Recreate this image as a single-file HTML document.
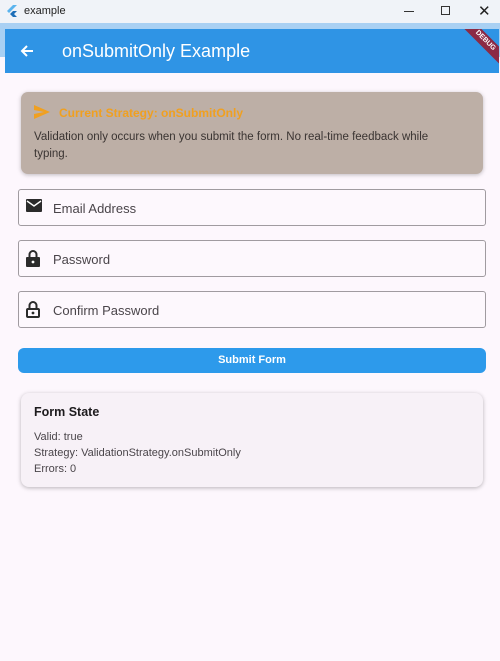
<!DOCTYPE html>
<html><head><meta charset="utf-8"><style>
*{margin:0;padding:0;box-sizing:border-box}
body{width:500px;height:661px;overflow:hidden;background:#fdf7fd;font-family:"Liberation Sans",sans-serif;position:relative}
.tb{position:absolute;left:0;top:0;width:500px;height:23px;background:#f0f3f8;font-size:11px;color:#222}
.strip{position:absolute;left:0;top:23px;width:500px;height:34px;background:#a9d0f3}
.bar{position:absolute;left:5px;top:29px;width:494px;height:44px;background:#2f94e5;color:#fff;overflow:hidden}
.fld{position:absolute;left:18px;width:468px;height:37px;border:1px solid #a09ba0;border-radius:3px;background:#fdf8fd;font-size:13px;color:#4a454a}
.fld span{position:absolute;left:34px;top:11px}
.fld svg{position:absolute;left:7px;top:9px}
</style></head><body>
<div class="tb">
<svg style="position:absolute;left:7px;top:5px" width="10" height="13" viewBox="0 0 10 13"><path d="M6 0L0 6l2 2 8-8z" fill="#5ab4ee"/><path d="M6 6L3 9l3 3h4L7 9l3-3z" fill="#1e6fb8"/></svg>
<span style="position:absolute;left:24px;top:5px">example</span>
<div style="position:absolute;left:404px;top:11px;width:10px;height:1px;background:#333"></div>
<div style="position:absolute;left:441px;top:6px;width:9px;height:9px;border:1px solid #333"></div>
<span style="position:absolute;left:478px;top:2px;font-size:15px">✕</span>
</div>
<div class="strip"></div>
<div class="bar">
<svg style="position:absolute;left:15px;top:15px" width="14" height="14" viewBox="0 0 14 14"><path d="M13 7H2M7 2L2 7l5 5" stroke="#fff" stroke-width="2" fill="none"/></svg>
<span style="position:absolute;left:57px;top:12px;font-size:18px">onSubmitOnly Example</span>
<div style="position:absolute;right:-16px;top:6px;width:60px;height:12px;background:#8b2a45;transform:rotate(45deg);color:#fff;font-size:7px;font-weight:bold;text-align:center;line-height:12px">DEBUG</div>
</div>
<div style="position:absolute;left:21px;top:92px;width:462px;height:82px;background:#bdafa6;border-radius:7px;box-shadow:0 1px 4px rgba(0,0,0,.25)">
<svg style="position:absolute;left:13px;top:13px" width="16" height="14" viewBox="0 0 16 14"><path d="M0 0L16 7 0 14 0 9 10 7 0 5z" fill="#f0a020"/></svg>
<span style="position:absolute;left:38px;top:14px;font-size:12px;font-weight:bold;color:#f0a020">Current Strategy: onSubmitOnly</span>
<div style="position:absolute;left:13px;top:37px;width:430px;font-size:11.5px;line-height:17px;color:#3a3432">Validation only occurs when you submit the form. No real-time feedback while typing.</div>
</div>
<div class="fld" style="top:189px"><svg width="16" height="13" viewBox="0 0 16 13"><rect width="16" height="13" rx="1" fill="#2b2b2b"/><path d="M1 2l7 5 7-5" stroke="#fff" stroke-width="1.4" fill="none"/></svg><span>Email Address</span></div>
<div class="fld" style="top:240px"><svg width="14" height="17" viewBox="0 0 14 17"><path d="M3.5 7V4.5a3.5 3.5 0 017 0V7" stroke="#2b2b2b" stroke-width="2" fill="none"/><rect y="7" width="14" height="10" rx="1" fill="#2b2b2b"/><circle cx="7" cy="12" r="1.4" fill="#fff"/></svg><span>Password</span></div>
<div class="fld" style="top:291px"><svg width="14" height="17" viewBox="0 0 14 17"><path d="M3.5 7V4.5a3.5 3.5 0 017 0V7" stroke="#2b2b2b" stroke-width="2" fill="none"/><rect x="1" y="8" width="12" height="8" rx="1" stroke="#2b2b2b" stroke-width="2" fill="none"/><circle cx="7" cy="12" r="1.4" fill="#2b2b2b"/></svg><span>Confirm Password</span></div>
<div style="position:absolute;left:18px;top:348px;width:468px;height:25px;background:#2d9aeb;border-radius:6px;color:#fff;font-size:11px;font-weight:bold;text-align:center;line-height:25px">Submit Form</div>
<div style="position:absolute;left:21px;top:393px;width:462px;height:94px;background:#f7f1f7;border-radius:8px;box-shadow:0 1px 4px rgba(0,0,0,.28)">
<div style="position:absolute;left:13px;top:12px;font-size:12.5px;font-weight:bold;color:#1d1b1d">Form State</div>
<div style="position:absolute;left:13px;top:36px;font-size:11px;line-height:16px;color:#4a454a">Valid: true<br>Strategy: ValidationStrategy.onSubmitOnly<br>Errors: 0</div>
</div>
</body></html>
